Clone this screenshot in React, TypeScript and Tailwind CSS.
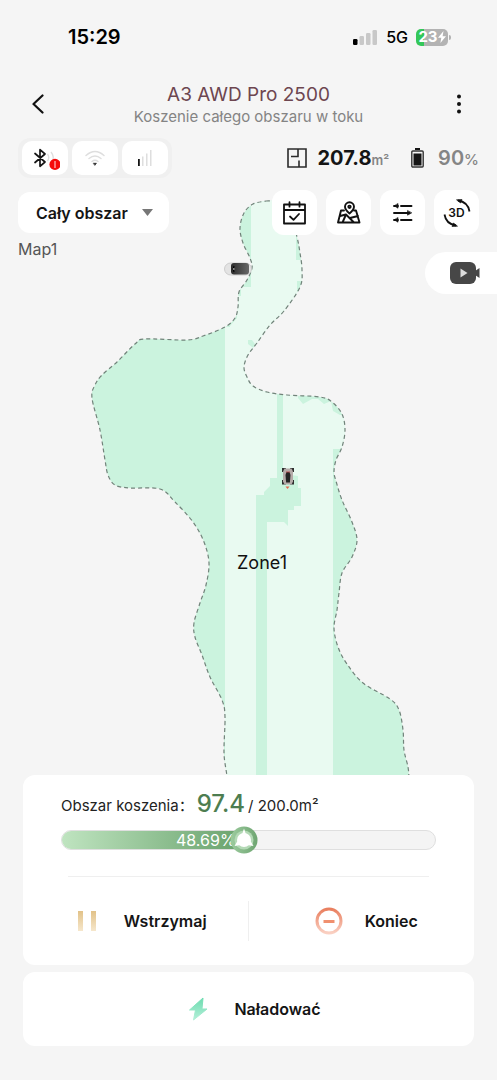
import React from 'react';

type Point = [number, number];

const rightEdge: Point[] = [
  [266, 201], [278, 202], [290, 214], [297, 237], [300, 253], [302, 270], [300, 287], [284, 311],
  [270, 325], [257, 343], [248, 355], [244, 367], [247, 377], [253, 386], [267, 392], [287, 395],
  [320, 397], [332, 402], [342, 414], [345, 430], [342, 447], [336, 460], [334, 472], [336, 481],
  [342, 500], [352, 522], [357, 540], [352, 557], [342, 573], [339, 593], [337, 610], [334, 628],
  [338, 647], [347, 664], [363, 683], [390, 699], [399, 710], [403, 730], [404, 750], [408, 767],
  [409, 780], [409, 800], [408, 830],
];

const leftEdge: Point[] = [
  [230, 830], [228, 800], [227, 777], [224, 753], [225, 717], [222, 700], [210, 677], [202, 655],
  [195, 637], [194, 623], [200, 603], [206, 585], [209, 563], [204, 542], [193, 522], [175, 502],
  [160, 489], [130, 488], [115, 485], [108, 475], [105, 460], [100, 430], [92, 398], [95, 385],
  [102, 375], [117, 362], [135, 344], [145, 339], [187, 340], [203, 336], [225, 327], [235, 318],
  [238, 307], [239, 292], [247, 280], [252, 268], [250, 258], [243, 243], [240, 228], [244, 213],
  [253, 204], [266, 201],
];

function smooth(points: Point[]): string {
  let d = `M${points[0][0]} ${points[0][1]}`;
  for (let i = 0; i < points.length - 1; i++) {
    const p0 = points[Math.max(i - 1, 0)];
    const p1 = points[i];
    const p2 = points[i + 1];
    const p3 = points[Math.min(i + 2, points.length - 1)];
    d += ` C${p1[0] + (p2[0] - p0[0]) / 6} ${p1[1] + (p2[1] - p0[1]) / 6} ${p2[0] - (p3[0] - p1[0]) / 6} ${p2[1] - (p3[1] - p1[1]) / 6} ${p2[0]} ${p2[1]}`;
  }
  return d;
}

const outline = smooth([...rightEdge, ...leftEdge]) + ' Z';

function LawnMap() {
  return (
    <svg
      className="absolute inset-0 h-full w-full"
      viewBox="0 134 497 641"
      preserveAspectRatio="xMidYMin slice"
      role="img"
      aria-label="Map1"
    >
      <defs>
        <clipPath id="lawn">
          <path d={outline} />
        </clipPath>
        <linearGradient id="dock" x1="0" x2="1" y1="0" y2="0">
          <stop offset="0" stopColor="#2c2c2c" />
          <stop offset="1" stopColor="#686868" />
        </linearGradient>
      </defs>
      <g clipPath="url(#lawn)">
        <rect x="80" y="190" width="340" height="650" fill="#cbf3de" />
        <path
          d="M251 190H296V260H303V281H297V300L296 311H284V324H270V334L257 347L252 340H248V344L256 350V372H298V398L303 404L312 399L318 399L324 404L331 401L333 411L340 415H347V449H333V840H225V327H230V326L237 318V296H241V287H251Z"
          fill="#e9faf1"
        />
        <path
          d="M277 390H283V474L298 476V488H301V506H294V510H288V526L284 522H267V840H256V495H264V492L270 486V478H277Z"
          fill="#cbf3de"
        />
      </g>
      <path d={outline} fill="none" stroke="#71837a" strokeWidth="1.200" strokeDasharray="4 3" />
      <g>
        <rect x="224.500" y="263" width="27" height="12" rx="6" fill="#e3e3e3" stroke="#c4c4c4" strokeWidth=".8" />
        <rect x="231" y="263" width="18" height="11.500" rx="3" fill="url(#dock)" />
        <path d="M234 266q-1.500 3 0 6" stroke="#000" strokeWidth="1.200" fill="none" />
        <circle cx="233.800" cy="269" r=".7" fill="#fff" />
      </g>
      <g>
        <path d="M282 468h4v4h-4zM290 468h4v4h-4zM282 480h4v4.500h-4zM290 480h4v4.500h-4z" fill="#2f2f2f" />
        <path d="M284.500 468.500h7l1.500 3v10l-1.500 3h-7l-1.500-3v-10z" fill="#b5aaa9" />
        <path d="M286.500 472h3l1 3-.6 7.500h-3.800l-.6-7.500z" fill="#242424" />
        <path d="M286 472h4" stroke="#c04444" strokeWidth=".8" />
        <path d="M285.500 486.500h4l-2 2.500z" fill="#e5654c" />
      </g>
      <text x="262" y="569" textAnchor="middle" fill="#111" fontSize="18" fontFamily="Inter, sans-serif">
        Zone1
      </text>
    </svg>
  );
}

function StatusBar() {
  return (
    <div className="flex h-[74px] items-center justify-between pr-[46px] pl-[68px]">
      <span className="text-[20px] leading-6 font-semibold text-black">15:29</span>
      <div className="flex items-center gap-2">
        <svg width="26" height="17" viewBox="0 0 26 17" aria-hidden="true">
          <rect x="1" y="10" width="4.500" height="6" rx="1.200" fill="#000" />
          <rect x="7.500" y="7" width="4.500" height="9" rx="1.200" fill="#c8c8c8" />
          <rect x="14" y="4" width="4.500" height="12" rx="1.200" fill="#c8c8c8" />
          <rect x="20.500" y="1" width="4.500" height="15" rx="1.200" fill="#c8c8c8" />
        </svg>
        <span className="text-[16px] leading-6 font-medium text-black">5G</span>
        <div className="flex items-center gap-px">
          <div className="flex h-[17px] w-8 items-center justify-center rounded-[5px] bg-[linear-gradient(90deg,#34c759_25%,#b3b3b3_25%)] text-[15px] leading-4 font-bold text-white">
            23
            <svg width="8" height="12" viewBox="0 0 8 12" aria-hidden="true">
              <path d="M5.500 0 0 6.700h3.300L2.400 12 8 5.200H4.600z" fill="#fff" />
            </svg>
          </div>
          <span className="h-[5px] w-[2px] rounded-r-full bg-[#b3b3b3]" />
        </div>
      </div>
    </div>
  );
}

function Header() {
  return (
    <header className="flex h-[60px] items-center justify-between px-7">
      <button type="button" aria-label="Wstecz" className="flex w-5 justify-center">
        <svg width="12" height="20" viewBox="0 0 12 20" fill="none" stroke="#111" strokeWidth="2.200">
          <path d="M10.500 1.500 1.500 10l9 8.500" strokeLinecap="round" strokeLinejoin="round" />
        </svg>
      </button>
      <div className="pt-[2px] text-center">
        <h1 className="text-[19px] leading-6 text-[#6d4650]">A3 AWD Pro 2500</h1>
        <p className="text-[15px] leading-5 text-[#848484]">Koszenie całego obszaru w toku</p>
      </div>
      <button type="button" aria-label="Więcej" className="flex w-5 justify-center">
        <svg width="4" height="20" viewBox="0 0 4 20" fill="#111">
          <circle cx="2" cy="2.500" r="2" />
          <circle cx="2" cy="10" r="2" />
          <circle cx="2" cy="17.500" r="2" />
        </svg>
      </button>
    </header>
  );
}

function ConnectionIcons() {
  return (
    <div className="flex h-10 items-center gap-1 rounded-xl bg-[#f0f0f0] px-1">
      <button type="button" aria-label="Bluetooth" className="flex h-[34px] w-[46px] items-center justify-center rounded-[10px] bg-white">
        <svg width="30" height="24" viewBox="0 0 30 24" fill="none">
          <path d="M5 7.500l10 8.500-5 4.300V3.700l5 4.300-10 8.500" stroke="#151515" strokeWidth="1.700" strokeLinejoin="round" strokeLinecap="round" />
          <path d="M17.500 8q2.500 3.500 0 7M21 6q3 4 2 8" stroke="#dedede" strokeWidth="1.300" />
          <circle cx="25" cy="18.400" r="5.600" fill="#f50a0a" />
          <path d="M25 15v7" stroke="#ffc0c0" strokeWidth="1.200" />
        </svg>
      </button>
      <button type="button" aria-label="Wi-Fi" className="flex h-[34px] w-[46px] items-center justify-center rounded-[10px] bg-white">
        <svg width="20" height="16" viewBox="0 0 20 16" fill="none" stroke="#dedede" strokeWidth="1.400" strokeLinecap="round">
          <path d="M1 5.500Q10-2.500 19 5.500M4 8.500q6-5 12 0M7 11.500q3-2.500 6 0" />
          <path d="M8.500 13.200h3l-1.500 2z" fill="#151515" stroke="#151515" strokeWidth=".5" />
        </svg>
      </button>
      <button type="button" aria-label="Sygnał" className="flex h-[34px] w-[46px] items-center justify-center rounded-[10px] bg-white">
        <svg width="16" height="18" viewBox="0 0 16 18" aria-hidden="true">
          <rect x="1" y="10" width="1.800" height="7" fill="#151515" />
          <rect x="5" y="7.500" width="1.500" height="9.500" fill="#dedede" />
          <rect x="9" y="4.500" width="1.500" height="12.500" fill="#dedede" />
          <rect x="13" y="1" width="1.500" height="16" fill="#dedede" />
        </svg>
      </button>
    </div>
  );
}

function Stats() {
  return (
    <div className="flex items-center">
      <svg width="20" height="20" viewBox="0 0 20 20" fill="none" stroke="#2b2b2b" strokeWidth="1.600" aria-hidden="true">
        <path d="M1 1h18v18H1zM4 8.500h7V1M12 19v-6.500" />
      </svg>
      <span className="ml-[11px] text-[20px] leading-6 font-bold text-[#151515]">207.8</span>
      <span className="mt-1 text-[13px] leading-4 font-semibold text-[#858585]">m²</span>
      <svg className="ml-[22px]" width="13" height="20" viewBox="0 0 13 20" aria-hidden="true">
        <rect x="4" y="0" width="5" height="2" fill="#151515" />
        <rect x=".8" y="3" width="11.400" height="16" rx="1" fill="none" stroke="#333" strokeWidth="1.400" />
        <rect x="2.500" y="5.500" width="8" height="12" fill="#151515" />
      </svg>
      <span className="ml-[14px] text-[20px] leading-6 font-semibold text-[#858585]">90</span>
      <span className="mt-1 text-[15px] leading-4 font-medium text-[#858585]">%</span>
    </div>
  );
}

const toolClass = 'flex h-[45px] w-[45px] items-center justify-center rounded-xl bg-white';

function Tools() {
  return (
    <div className="flex gap-[9px]">
      <button type="button" aria-label="Harmonogram" className={toolClass}>
        <svg width="24" height="24" viewBox="0 0 24 24" fill="none" stroke="#111" strokeWidth="1.800" strokeLinecap="round" strokeLinejoin="round">
          <path d="M1 3.500h21v19H1zM1 9h21M6.500 1.200v4.500M16.500 1.200v4.500M7 15.500l3.500 3.300L16 13" />
        </svg>
      </button>
      <button type="button" aria-label="Mapa" className={toolClass}>
        <svg width="24" height="24" viewBox="0 0 24 24" fill="none" stroke="#111" strokeWidth="1.900" strokeLinecap="round" strokeLinejoin="round">
          <path d="M7 9.500H4L1 21.500h21.500l-3.500-12H17M3 15l6-1.500 8 8M9 13.500 5.500 21.500M13 17l8-2" />
          <path d="M12.500 12.500Q8 8.800 8 5.800a4.500 4.500 0 0 1 9 0q0 3-4.500 6.700z" fill="#fff" />
          <circle cx="12.500" cy="5.800" r="1.200" />
        </svg>
      </button>
      <button type="button" aria-label="Ustawienia" className={toolClass}>
        <svg width="20" height="20" viewBox="0 0 20 20" fill="none" stroke="#111" strokeWidth="1.900" strokeLinecap="round">
          <path d="M1 3h4M8 3h10.500M1 10h14M1 17h4M8 17h10.500" />
          <path d="M5 .8v4.400L1.500 3zM14.500 7.800v4.400l4-2.200zM5 14.800v4.400L1.500 17z" fill="#111" strokeWidth=".6" />
        </svg>
      </button>
      <button type="button" aria-label="Widok 3D" className={toolClass + ' relative'}>
        <svg width="28" height="28" viewBox="0 0 28 28" fill="none" stroke="#111" strokeWidth="1.800">
          <path d="M15 1.500Q25 3 26.500 12.500M1.500 15.500Q3 25 13 26.500" />
          <path d="M13.500.8l5.500-.3-1.500 3.500zM14.500 27.200l-5.500.3 1.500-3.500z" fill="#111" strokeWidth=".6" />
        </svg>
        <span className="absolute inset-0 flex items-center justify-center text-[12px] leading-4 font-semibold text-[#111]">3D</span>
      </button>
    </div>
  );
}

function AreaSelect() {
  return (
    <div className="relative">
      <select
        aria-label="Obszar"
        className="h-[41px] w-[151px] appearance-none rounded-xl bg-white pl-[18px] text-[16px] font-semibold text-[#151515]"
      >
        <option>Cały obszar</option>
      </select>
      <svg className="pointer-events-none absolute top-[17px] right-4" width="11" height="7" viewBox="0 0 11 7" aria-hidden="true">
        <path d="M0 0h11L5.500 7z" fill="#777" />
      </svg>
    </div>
  );
}

function ProgressBar({ value }: { value: number }) {
  return (
    <div
      role="progressbar"
      aria-label="Obszar koszenia"
      aria-valuenow={value}
      aria-valuemin={0}
      aria-valuemax={100}
      className="relative mt-[6px] h-5 rounded-full border border-[#dfdfdf] bg-[#f4f4f4]"
    >
      <div
        className="flex h-full items-center justify-end rounded-full bg-linear-to-r from-[#bfe4c0] to-[#68a26c] pr-2 text-[16px] leading-4 text-white"
        style={{ width: `${value}%` }}
      >
        {value}%
      </div>
      <svg className="absolute -top-[5px] -ml-[14px]" style={{ left: `${value}%` }} width="28" height="28" viewBox="0 0 28 28" aria-hidden="true">
        <defs>
          <linearGradient id="knob" x1="0" x2="1" y1="0" y2="0">
            <stop offset="0" stopColor="#9ccb9e" />
            <stop offset="1" stopColor="#6ea571" />
          </linearGradient>
        </defs>
        <circle cx="14" cy="14" r="13.500" fill="url(#knob)" />
        <circle cx="14" cy="14" r="9.500" fill="#b4d9b6" />
        <circle cx="14" cy="14" r="7" fill="#fff" />
        <path d="M14 2.500l2 6h-4zM4.500 20l3-5 3 4zM23.500 20l-3-5-3 4z" fill="#fff" />
      </svg>
    </div>
  );
}

const actionLabel = 'text-[16px] leading-6 font-semibold text-[#151515]';

function MowingCard() {
  return (
    <section className="rounded-xl bg-white">
      <div className="px-[38px] pt-[13px]">
        <div className="flex h-9 items-center gap-[3px] text-[15px] leading-6 text-[#222]">
          <span>Obszar koszenia：</span>
          <span className="-mt-1 text-[24px] leading-8 font-medium text-[#4d7d50]">97.4</span>
          <span>/ 200.0m²</span>
        </div>
        <ProgressBar value={48.69} />
        <hr className="mx-[7px] mt-[26px] border-[#efefef]" />
      </div>
      <div className="grid h-[88px] grid-cols-2 items-center divide-x divide-[#efefef]">
        <button type="button" className="flex h-10 items-center justify-center gap-[22px] pl-[10px]">
          <svg width="28" height="28" viewBox="0 0 28 28" aria-hidden="true">
            <defs>
              <linearGradient id="pause" x1="0" x2="0" y1="0" y2="1">
                <stop offset="0" stopColor="#e2c288" />
                <stop offset="1" stopColor="#f6e7cc" />
              </linearGradient>
            </defs>
            <rect x="4" y="4" width="5" height="20" fill="url(#pause)" />
            <rect x="17" y="4" width="5" height="20" fill="url(#pause)" />
          </svg>
          <span className={actionLabel}>Wstrzymaj</span>
        </button>
        <button type="button" className="flex h-10 items-center justify-center gap-[22px] pl-[10px]">
          <svg width="28" height="28" viewBox="0 0 28 28" fill="none" aria-hidden="true">
            <defs>
              <linearGradient id="stop" x1="0" x2="0" y1="0" y2="1">
                <stop offset="0" stopColor="#e97f5f" />
                <stop offset="1" stopColor="#fad0c2" />
              </linearGradient>
            </defs>
            <circle cx="14" cy="14" r="12" stroke="url(#stop)" strokeWidth="3" />
            <rect x="8.500" y="13" width="11" height="3" fill="#f0906f" />
          </svg>
          <span className={actionLabel}>Koniec</span>
        </button>
      </div>
    </section>
  );
}

function ChargeButton() {
  return (
    <button type="button" className="flex h-[74px] items-center justify-center gap-[22px] rounded-xl bg-white pl-2">
      <svg width="28" height="28" viewBox="0 0 28 28" aria-hidden="true">
        <defs>
          <linearGradient id="charge" x1="0" x2="0" y1="0" y2="1">
            <stop offset="0" stopColor="#6ddcb0" />
            <stop offset="1" stopColor="#b5efd9" />
          </linearGradient>
        </defs>
        <path d="M19 3 5.500 15h6L9.500 25 23 14h-5z" fill="url(#charge)" stroke="url(#charge)" strokeWidth="1" strokeLinejoin="round" />
      </svg>
      <span className={actionLabel}>Naładować</span>
    </button>
  );
}

export default function App() {
  return (
    <div className="flex min-h-screen flex-col bg-[#f5f5f5] font-[Inter,'Noto_Sans_CJK_SC',sans-serif]">
      <StatusBar />
      <Header />
      <main className="flex flex-1 flex-col">
        <section className="relative flex-1">
          <LawnMap />
          <div className="relative flex flex-col gap-3 px-[18px] pt-1">
            <div className="flex items-center justify-between">
              <ConnectionIcons />
              <Stats />
            </div>
            <div className="flex items-center justify-between">
              <AreaSelect />
              <Tools />
            </div>
          </div>
          <div className="relative mt-1 flex items-start justify-between pl-[18px]">
            <span className="text-[16px] leading-5 text-[#555]">Map1</span>
            <button type="button" aria-label="Kamera" className="mt-[13px] flex h-[42px] w-[72px] items-center rounded-l-full bg-white pl-6">
              <svg width="31" height="22" viewBox="0 0 31 22" aria-hidden="true">
                <rect x="1" y="0" width="26" height="22" rx="6" fill="#474747" />
                <path d="M26 9l4.500-3v10L26 13z" fill="#474747" />
                <path d="M11.500 6.500v9l7-4.500z" fill="#ddd" />
              </svg>
            </button>
          </div>
        </section>
        <div className="relative flex flex-col gap-[7px] px-[23px] pb-[34px]">
          <MowingCard />
          <ChargeButton />
        </div>
      </main>
    </div>
  );
}
